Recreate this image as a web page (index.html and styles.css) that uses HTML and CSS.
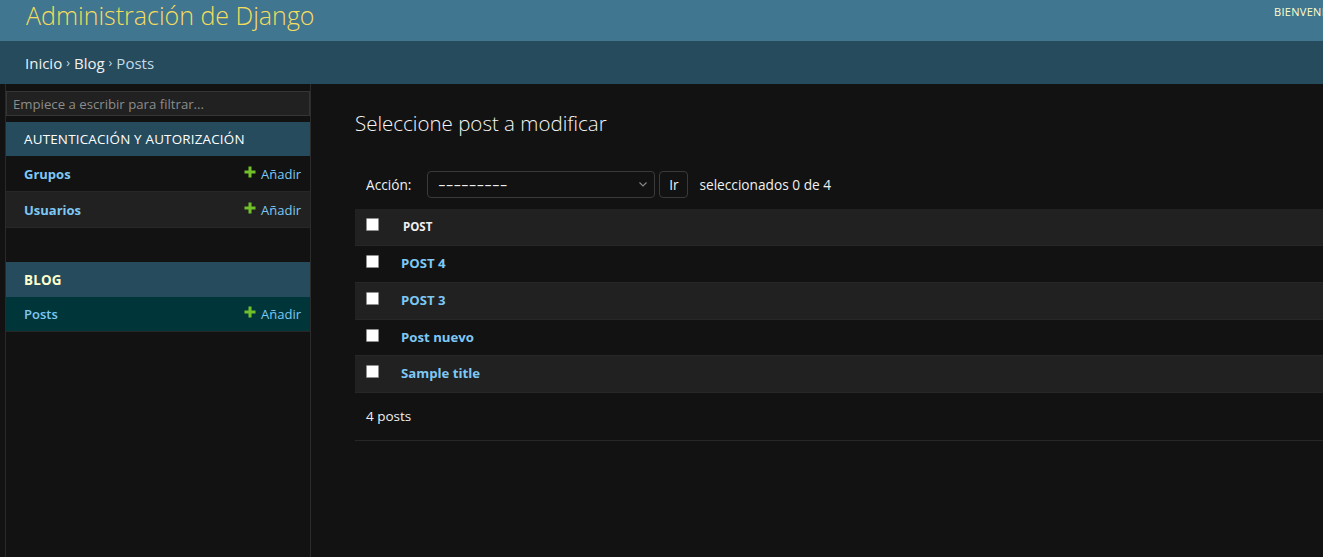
FILE: index.html
```html
<!DOCTYPE html>
<html lang="es">
<head>
<meta charset="utf-8">
<title>Seleccione post a modificar | Administración de Django</title>
<link rel="stylesheet" href="styles.css">
</head>
<body>
<header class="header">
  <div class="branding"><h1 class="site-name">Administración de Django</h1></div>
  <div class="user-tools">Bienvenido/a, <strong>admin</strong>. Ver el sitio / Cambiar contraseña / Terminar sesión</div>
</header>
<nav class="breadcrumbs"><a href="#">Inicio</a><span class="sep">›</span><a href="#">Blog</a><span class="sep">›</span><span>Posts</span></nav>
<div class="main">
  <div class="toggle"></div>
  <nav class="sidebar">
    <input class="nav-filter" type="search" placeholder="Empiece a escribir para filtrar...">
    <div class="module">
      <div class="caption">Autenticación y autorización</div>
      <div class="model-row"><a class="model" href="#">Grupos</a><a class="addlink" href="#"><svg viewBox="0 0 12 12" width="12" height="12"><path d="M4.5 0.5h3v4h4v3h-4v4h-3v-4h-4v-3h4z" fill="#70bf2b"/></svg>Añadir</a></div>
      <div class="model-row alt"><a class="model" href="#">Usuarios</a><a class="addlink" href="#"><svg viewBox="0 0 12 12" width="12" height="12"><path d="M4.5 0.5h3v4h4v3h-4v4h-3v-4h-4v-3h4z" fill="#70bf2b"/></svg>Añadir</a></div>
    </div>
    <div class="module current-app">
      <div class="caption">Blog</div>
      <div class="model-row current"><a class="model" href="#">Posts</a><a class="addlink" href="#"><svg viewBox="0 0 12 12" width="12" height="12"><path d="M4.5 0.5h3v4h4v3h-4v4h-3v-4h-4v-3h4z" fill="#70bf2b"/></svg>Añadir</a></div>
    </div>
  </nav>
  <main class="content">
    <h1 class="page-title">Seleccione post a modificar</h1>
    <div class="actions">
      <label class="action-label">Acción:</label>
      <div class="select"><span class="dashes">---------</span><svg viewBox="0 0 8 5" width="8" height="5"><path d="M0.5 0.5L4 4L7.5 0.5" fill="none" stroke="#8a8a8a" stroke-width="1.1"/></svg></div>
      <button class="go-btn" type="button">Ir</button>
      <span class="action-counter">seleccionados 0 de 4</span>
    </div>
    <table class="result-list">
      <thead>
        <tr><th class="cb-col"><input class="cb" type="checkbox"></th><th class="col-title">Post</th></tr>
      </thead>
      <tbody>
        <tr><td class="cb-col"><input class="cb" type="checkbox"></td><th class="row-title"><a href="#">POST 4</a></th></tr>
        <tr><td class="cb-col"><input class="cb" type="checkbox"></td><th class="row-title"><a href="#">POST 3</a></th></tr>
        <tr><td class="cb-col"><input class="cb" type="checkbox"></td><th class="row-title"><a href="#">Post nuevo</a></th></tr>
        <tr><td class="cb-col"><input class="cb" type="checkbox"></td><th class="row-title"><a href="#">Sample title</a></th></tr>
      </tbody>
    </table>
    <p class="paginator">4 posts</p>
  </main>
</div>
</body>
</html>
```
FILE: styles.css
```css
html, body {
  margin: 0;
  padding: 0;
}
body {
  background: #121212;
  color: #f5f5f5;
  font-family: "Open Sans", "Noto Sans", sans-serif;
  font-size: 13px;
  overflow: hidden;
}
a { text-decoration: none; }

.header {
  display: flex;
  height: 41px;
  background: #417690;
  white-space: nowrap;
}
.branding {
  flex: 0 0 1274px;
  box-sizing: border-box;
  padding-left: 26px;
}
.site-name {
  margin: 0;
  padding-top: 0;
  font-weight: 300;
  font-size: 25px;
  line-height: 30px;
  color: #f5dd5d;
}
.user-tools {
  flex-shrink: 0;
  font-size: 11px;
  line-height: 16px;
  padding-top: 4px;
  text-transform: uppercase;
  letter-spacing: 0.3px;
  color: #ffffcc;
}
.user-tools strong { font-weight: 600; }

.breadcrumbs {
  display: flex;
  align-items: center;
  height: 43px;
  padding-left: 25px;
  background: #264b5d;
  color: #c4dce8;
  font-size: 15px;
}
.breadcrumbs a { color: #f0f0f0; }
.breadcrumbs .sep { margin: 0 4px; font-size: 12.5px; }

.main {
  display: flex;
  height: 473px;
}
.toggle {
  flex: 0 0 5px;
  border-right: 1px solid #2a2a2a;
}
.sidebar {
  flex: 0 0 304px;
  border-right: 1px solid #2c2c2c;
}
.nav-filter {
  display: block;
  width: 100%;
  height: 25px;
  box-sizing: border-box;
  margin: 7px 0 6px;
  padding: 2px 6px;
  border: 1px solid #353535;
  background: #212121;
  color: #f5f5f5;
  font-family: inherit;
  font-size: 13.2px;
  outline: none;
}
.nav-filter::placeholder { color: #8c8c8c; }

.module { margin-bottom: 34px; }
.caption {
  height: 34px;
  display: flex;
  align-items: center;
  padding-left: 18px;
  background: #264b5d;
  color: #ffffff;
  font-size: 13.4px;
  text-transform: uppercase;
  letter-spacing: 0.2px;
}
.current-app .caption {
  height: 35px;
  font-weight: 700;
  color: #ffffcc;
}
.model-row {
  display: flex;
  justify-content: space-between;
  align-items: center;
  height: 35px;
  padding: 0 9px 0 18px;
  border-bottom: 1px solid #272727;
  background: #121212;
}
.model-row.alt { background: #212121; }
.model-row.current { height: 34px; background: #00363a; }
.model {
  color: #7ec8f4;
  font-weight: 700;
  font-size: 13px;
}
.current .model { font-weight: 600; }
.addlink {
  display: flex;
  align-items: center;
  color: #7ec8f4;
  font-size: 13px;
}
.addlink svg { margin: 0 5px 4px 0; }

.content {
  flex: 1;
  padding: 25px 0 0 44px;
  min-width: 0;
}
.page-title {
  margin: 0 0 24px;
  font-size: 20.5px;
  line-height: 28px;
  font-weight: 300;
  color: #f5f5f5;
}
.actions {
  display: flex;
  align-items: center;
  padding: 10px 0 11px 11px;
  color: #f0f0f0;
  font-size: 13.7px;
}
.action-label { margin-right: 16px; }
.select {
  display: flex;
  align-items: center;
  justify-content: space-between;
  width: 228px;
  height: 27px;
  box-sizing: border-box;
  padding: 0 7px 0 10px;
  border: 1px solid #3a3a3a;
  border-radius: 4px;
  background: #121212;
  color: #f0f0f0;
  font-size: 13.7px;
}
.dashes {
  display: inline-block;
  transform: scaleX(1.75);
  transform-origin: left center;
}
.go-btn {
  margin-left: 4px;
  width: 29px;
  height: 27px;
  padding: 0;
  border: 1px solid #3a3a3a;
  border-radius: 4px;
  background: #121212;
  color: #f0f0f0;
  font-family: inherit;
  font-size: 13.7px;
}
.action-counter { margin-left: 11px; }

.result-list {
  width: 100%;
  border-collapse: collapse;
}
.result-list td, .result-list th {
  padding: 8px;
  line-height: 19.75px;
  text-align: left;
  vertical-align: top;
  border-bottom: 1px solid #272727;
}
.result-list thead th {
  background: #212121;
  font-size: 11.5px;
  font-weight: 700;
  text-transform: uppercase;
  color: #f0f0f0;
  line-height: 20px;
}
.result-list thead th.col-title { padding-left: 10px; }
.result-list .cb-col {
  width: 16px;
  padding: 9px 11px 0 11px;
}
.result-list tbody tr:nth-child(even) { background: #212121; }
.result-list tbody tr:nth-child(odd) { background: #121212; }
.row-title a {
  color: #7ec8f4;
  font-weight: 700;
  font-size: 13.2px;
}
.cb {
  -webkit-appearance: none;
  appearance: none;
  display: block;
  width: 13px;
  height: 13px;
  margin: 0;
  border: 1px solid #8f8f8f;
  border-radius: 1px;
  background: #ffffff;
}
.paginator {
  margin: 0;
  padding: 12px 11px 12px;
  line-height: 23px;
  font-size: 13.5px;
  color: #f0f0f0;
  border-bottom: 1px solid #272727;
}
```
